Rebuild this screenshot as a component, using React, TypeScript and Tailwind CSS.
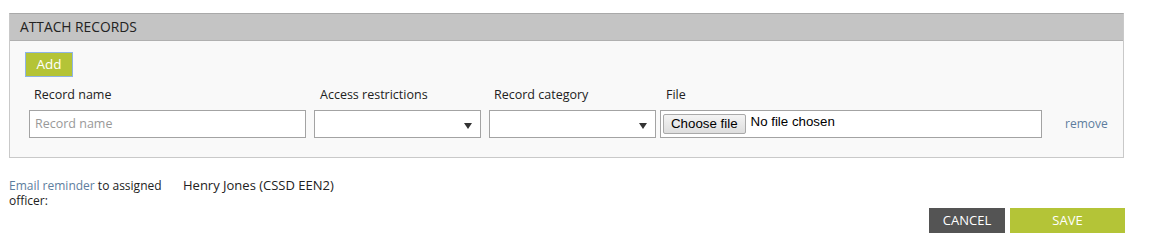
import React from "react";

const Caret = () => (
  <svg width="8" height="6" viewBox="0 0 8 6" className="absolute right-[8px] top-[12px]">
    <path d="M0 0 L8 0 L4 6 Z" fill="#333" />
  </svg>
);

const App = () => {
  return (
    <div className="w-[1150px] h-[246px] bg-white px-[9px] pt-[13px]" style={{ fontFamily: "'Open Sans', Lato, sans-serif" }}>
      {/* Attach records panel */}
      <div className="w-[1115px] border border-[#c9c9c9] border-t-[#a9a9a9]">
        <div className="h-[27px] bg-[#c4c4c4] border-b border-[#b0b0b0] px-[10px] flex items-center text-[13.8px] text-[#222]">
          ATTACH RECORDS
        </div>
        <div className="bg-[#f9f9f9] pl-[15px] pt-[11px] pb-[19px]">
          <button className="h-[25px] w-[48px] bg-[#b4c437] border border-[#8fb4e6] text-white text-[13.5px] flex items-center justify-center">
            Add
          </button>
          <div className="flex mt-[10px] ml-[4px] text-[12.5px] text-[#222] h-[16px] items-center">
            <div className="w-[285px] pl-[5px]">Record name</div>
            <div className="w-[175px] pl-[6px]">Access restrictions</div>
            <div className="w-[171px] pl-[5px]">Record category</div>
            <div className="pl-[6px]">File</div>
          </div>
          <div className="flex items-center mt-[7px] ml-[4px]">
            <div className="w-[277px] h-[28px] border border-[#a3a3a3] bg-white flex items-center px-[5px] text-[12.5px] text-[#999]">
              Record name
            </div>
            <div className="relative w-[167px] h-[28px] ml-[8px] border border-[#a3a3a3] bg-white">
              <Caret />
            </div>
            <div className="relative w-[167px] h-[28px] ml-[8px] border border-[#a3a3a3] bg-white">
              <Caret />
            </div>
            <div className="w-[382px] h-[28px] ml-[4px] border border-[#a3a3a3] bg-white flex items-center pl-[2px]" style={{ fontFamily: "'Liberation Sans', Arial, sans-serif" }}>
              <div className="h-[20px] px-[7px] border border-[#a9a9a9] rounded-[2px] bg-gradient-to-b from-[#f4f4f4] to-[#dedede] text-[13.3px] text-black flex items-center">
                Choose file
              </div>
              <span className="ml-[5px] text-[13.3px] text-black -mt-[4px]">No file chosen</span>
            </div>
            <a className="ml-[23px] text-[12px] text-[#5d7d9e]">remove</a>
          </div>
        </div>
      </div>

      {/* Email reminder */}
      <div className="flex mt-[20px] text-[#222] leading-[15px]">
        <div className="w-[174px] text-[12px]">
          <div>
            <span className="text-[#5d7d9e]">Email reminder</span> to assigned
          </div>
          <div>officer:</div>
        </div>
        <div className="text-[13px]">Henry Jones (CSSD EEN2)</div>
      </div>

      {/* Actions */}
      <div className="flex justify-end w-[1116px] gap-[5px]">
        <button className="w-[76px] h-[25px] bg-[#545454] text-white text-[13px] flex items-center justify-center">
          CANCEL
        </button>
        <button className="w-[115px] h-[25px] bg-[#b4c437] text-white text-[13px] flex items-center justify-center">
          SAVE
        </button>
      </div>
    </div>
  );
};

export default App;
